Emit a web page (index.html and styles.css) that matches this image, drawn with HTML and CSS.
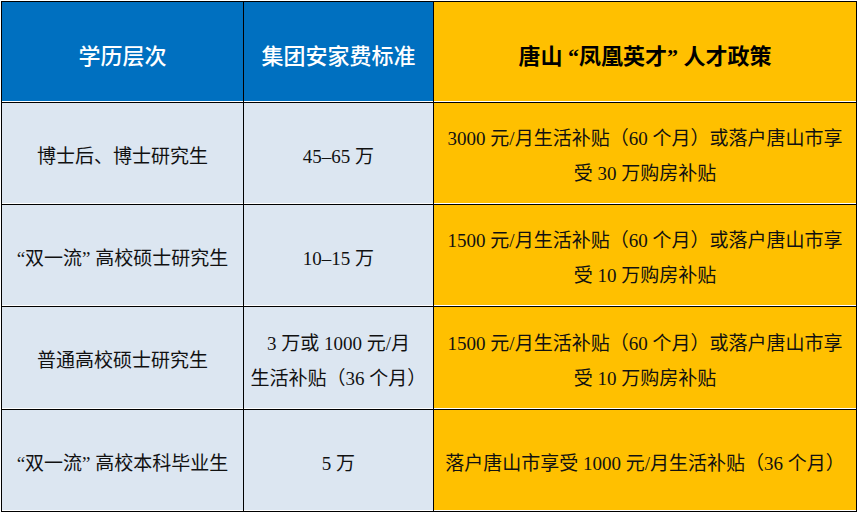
FILE: index.html
```html
<!DOCTYPE html>
<html lang="zh-CN">
<head>
<meta charset="utf-8">
<title>人才政策</title>
<link rel="stylesheet" href="styles.css">
</head>
<body>
<div class="wrap">
<table class="policy">
  <colgroup>
    <col class="c1">
    <col class="c2">
    <col class="c3">
  </colgroup>
  <thead>
    <tr class="head">
      <th class="blue">学历层次</th>
      <th class="blue">集团安家费标准</th>
      <th class="gold">唐山 “凤凰英才” 人才政策</th>
    </tr>
  </thead>
  <tbody>
    <tr class="row">
      <td class="light">博士后、博士研究生</td>
      <td class="light">45–65 万</td>
      <td class="gold">3000 元/月生活补贴（60 个月）或落户唐山市享<br>受 30 万购房补贴</td>
    </tr>
    <tr class="row">
      <td class="light">“双一流” 高校硕士研究生</td>
      <td class="light">10–15 万</td>
      <td class="gold">1500 元/月生活补贴（60 个月）或落户唐山市享<br>受 10 万购房补贴</td>
    </tr>
    <tr class="row tall">
      <td class="light">普通高校硕士研究生</td>
      <td class="light">3 万或 1000 元/月<br>生活补贴（36 个月）</td>
      <td class="gold">1500 元/月生活补贴（60 个月）或落户唐山市享<br>受 10 万购房补贴</td>
    </tr>
    <tr class="row">
      <td class="light">“双一流” 高校本科毕业生</td>
      <td class="light">5 万</td>
      <td class="gold">落户唐山市享受 1000 元/月生活补贴（36 个月）</td>
    </tr>
  </tbody>
</table>
</div>
</body>
</html>
```

FILE: styles.css
```css
html, body {
  margin: 0;
  padding: 0;
  background: #ffffff;
}

.wrap {
  padding: 1px 0 0 1px;
}

.policy {
  border-collapse: separate;
  border-spacing: 0;
  table-layout: fixed;
  width: 855px;
  border-left: 1px solid #000;
  border-top: 1px solid #000;
  font-family: "Liberation Serif", "Noto Sans CJK SC", serif;
  color: #111;
}

.c1 { width: 242px; }
.c2 { width: 190px; }
.c3 { width: 423px; }

.policy th,
.policy td {
  border-right: 1px solid #000;
  border-bottom: 1px solid #000;
  box-shadow: inset 0 -1px 0 #ffffff;
  text-align: center;
  vertical-align: middle;
  padding: 0 6px;
}

.head th {
  font-size: 22px;
  font-weight: 500;
  padding-top: 4px;
  box-sizing: border-box;
  height: 101px;
}

.row td {
  height: 96px;
  padding-top: 5px;
  font-size: 19px;
  line-height: 35px;
  font-weight: 400;
}

.row.tall td {
  height: 97px;
}

.blue {
  background: #0070c0;
  color: #ffffff;
}

.gold {
  background: #ffc000;
  color: #111;
}

.head .gold {
  font-weight: 700;
  color: #000;
}

.light {
  background: #dce6f1;
}
```
